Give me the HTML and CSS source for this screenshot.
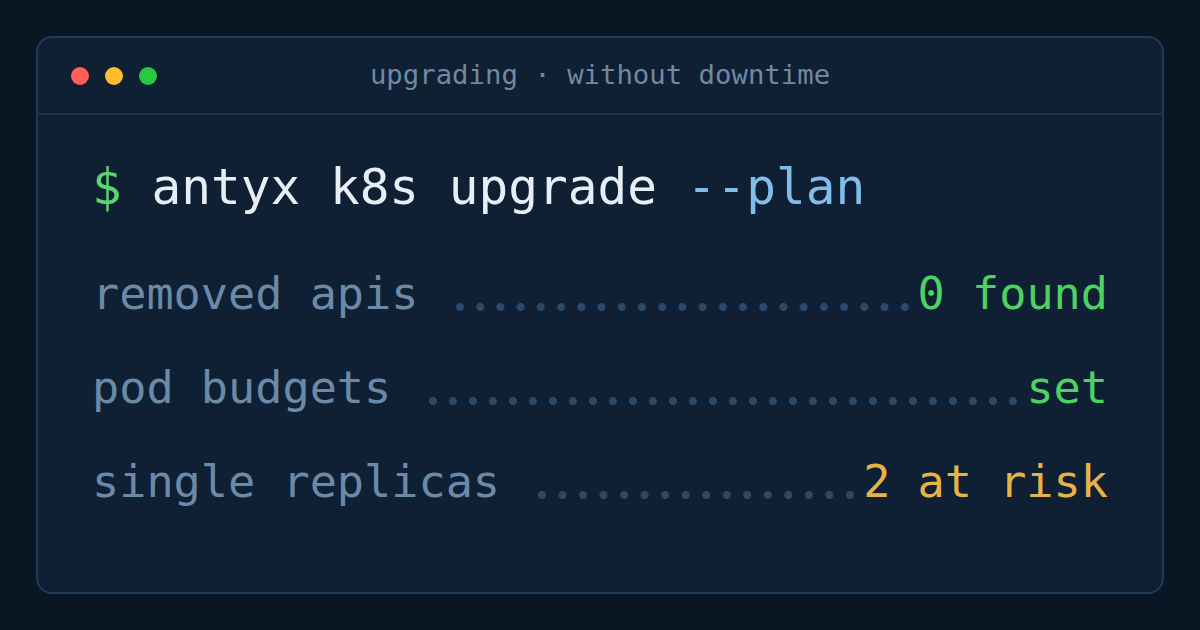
FILE: index.html
```html
<!DOCTYPE html>
<html>
<head>
<meta charset="utf-8">
<link rel="stylesheet" href="styles.css">
</head>
<body>
<div class="card">
  <div class="header">
    <div class="lights">
      <span class="light red"></span>
      <span class="light yellow"></span>
      <span class="light green"></span>
    </div>
    <div class="title">upgrading · without downtime</div>
  </div>
  <div class="body">
    <div class="cmd"><span class="prompt">$</span> antyx k8s upgrade <span class="flag">--plan</span></div>
    <div class="rows">
      <div class="row"><span class="label">removed apis</span><span class="leader"></span><span class="value ok">0 found</span></div>
      <div class="row"><span class="label">pod budgets</span><span class="leader"></span><span class="value ok">set</span></div>
      <div class="row"><span class="label">single replicas</span><span class="leader"></span><span class="value warn">2 at risk</span></div>
    </div>
  </div>
</div>
</body>
</html>
```
FILE: styles.css
```css
* { box-sizing: border-box; }
html, body { margin: 0; padding: 0; }
body {
  width: 1200px;
  height: 630px;
  background: #0b1624;
  padding: 36px;
  font-family: "DejaVu Sans Mono", monospace;
}
.card {
  height: 558px;
  background: #0f2035;
  border: 2px solid #1f3b59;
  border-radius: 16px;
  display: flex;
  flex-direction: column;
}
.header {
  position: relative;
  height: 77px;
  border-bottom: 2px solid #1b3450;
  display: flex;
  align-items: center;
  justify-content: center;
}
.lights {
  position: absolute;
  left: 33px;
  top: 29px;
  display: flex;
  gap: 16px;
}
.light {
  width: 18px;
  height: 18px;
  border-radius: 50%;
  display: block;
}
.red { background: #ff5f57; }
.yellow { background: #febc2e; }
.green { background: #28c840; }
.title {
  color: #6f89a3;
  font-size: 27.3px;
  margin-top: -2px;
}
.body {
  padding: 34px 54px 0 54px;
}
.cmd {
  font-size: 49.4px;
  line-height: 76px;
  color: #e8eef5;
}
.prompt { color: #5cd36f; }
.flag { color: #82bde8; }
.rows {
  margin-top: 22px;
}
.row {
  display: flex;
  align-items: baseline;
  font-size: 45.2px;
  line-height: 94px;
  height: 94px;
}
.label { color: #6b8aa7; }
.leader {
  flex: 1;
  align-self: stretch;
  margin: 0 3px 0 32px;
  background-image: radial-gradient(circle, #2b4a6a 3.6px, transparent 4.3px);
  background-size: 20px 10px;
  background-repeat: space no-repeat;
  background-position: right 0 bottom 29.5px;
}
.value.ok { color: #4fd062; }
.value.warn { color: #e6b446; }
```
